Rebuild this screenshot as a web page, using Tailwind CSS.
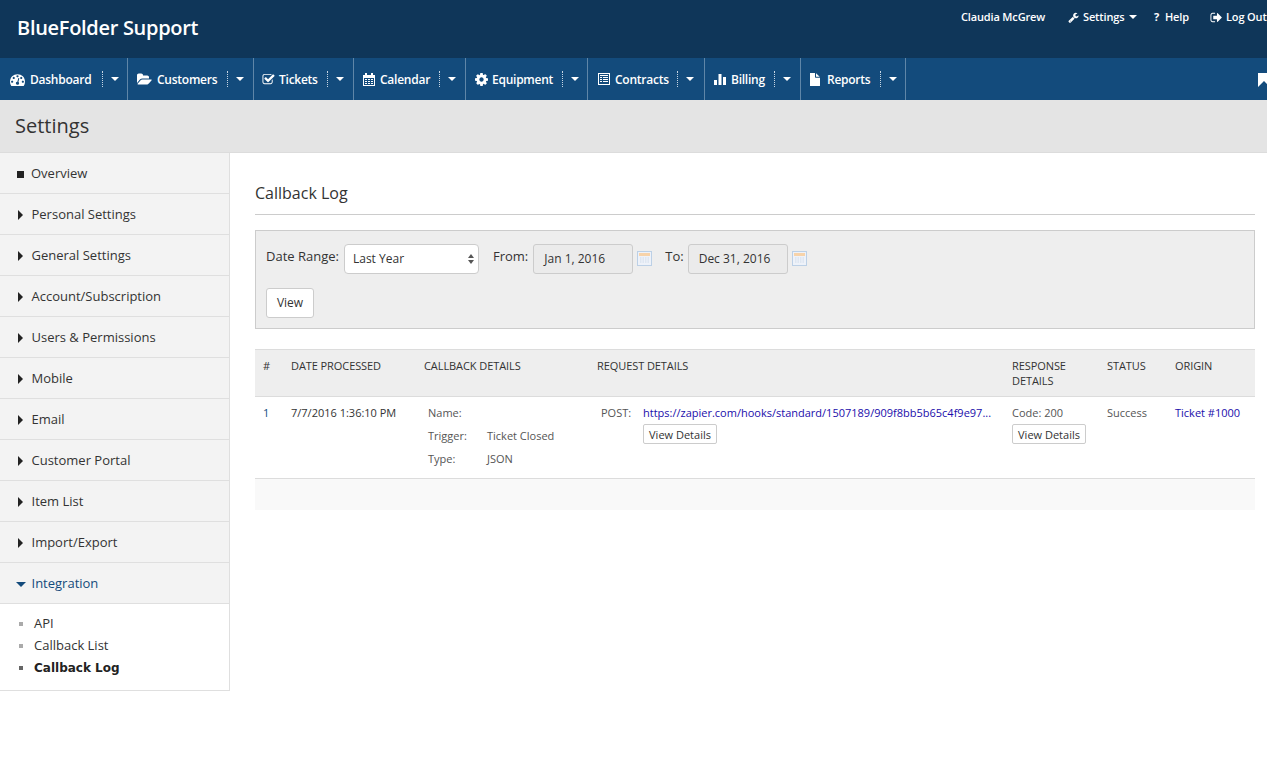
<!DOCTYPE html>
<html>
<head>
<meta charset="utf-8">
<script src="https://cdn.jsdelivr.net/npm/@tailwindcss/browser@4"></script>
</head>
<body class="h-[764px] overflow-hidden bg-white font-['Open_Sans',sans-serif] text-[13px] text-[#333]">
<header class="flex h-[58px] justify-between bg-[#0f3659] text-white">
  <div class="pl-[17px] pt-[14px] text-[20px] leading-[28px] font-semibold tracking-[-0.3px]">BlueFolder Support</div>
  <div class="flex h-[34px] items-center text-[11px] font-semibold tracking-[-0.15px]">
    <span class="mr-[24px] w-[83px] whitespace-nowrap">Claudia McGrew</span>
    <svg class="mr-[4px] h-[11px] w-[11px] fill-white" viewBox="0 0 1792 1792"><path d="M448 1472q0-26-19-45t-45-19-45 19-19 45 19 45 45 19 45-19 19-45zm644-420l-682 682q-37 37-90 37-52 0-91-37l-106-108q-38-36-38-90 0-53 38-91l681-681q39 98 114.5 173.5t173.5 114.5zm634-435q0 39-23 106-47 134-164.5 217.5t-258.5 83.5q-185 0-316.5-131.5t-131.5-316.5 131.5-316.5 316.5-131.5q58 0 121.5 16.5t107.5 46.5q16 11 16 28t-16 28l-293 169v224l193 107q5-3 79-48.5t135.5-81 70.5-35.5q15 0 23.5 10t8.5 25z"/></svg>
    <span class="mr-[4px] w-[42px]">Settings</span>
    <span class="mr-[17px] h-0 w-0 border-x-[4px] border-t-[4px] border-x-transparent border-t-white"></span>
    <span class="mr-[5px] w-[6px] font-bold">?</span><span class="mr-[21px] w-[24px]">Help</span>
    <svg class="mr-[3px] h-[13px] w-[13px] fill-white" viewBox="0 0 1792 1792"><path d="M704 1440q0 4 1 20t.5 26.5-3 23.5-10 19.5-20.5 6.5h-320q-119 0-203.5-84.5t-84.5-203.5v-704q0-119 84.5-203.5t203.5-84.5h320q13 0 22.5 9.5t9.5 22.5q0 4 1 20t.5 26.5-3 23.5-10 19.5-20.5 6.5h-320q-66 0-113 47t-47 113v704q0 66 47 113t113 47h312l11.5 1 11.5 3 8 5.5 7 9 2 13.5zm928-544q0 26-19 45l-544 544q-19 19-45 19t-45-19-19-45v-288h-448q-26 0-45-19t-19-45v-384q0-26 19-45t45-19h448v-288q0-26 19-45t45-19 45 19l544 544q19 19 19 45z"/></svg>
    <span class="w-[41px] whitespace-nowrap">Log Out</span>
  </div>
</header>
<nav class="flex h-[42px] overflow-hidden bg-[#134b7c] text-[12px] font-semibold tracking-[-0.25px] text-white">
  <div class="flex w-[128px] shrink-0 items-center border-r border-[#5f86a8] pl-[10px]">
    <svg class="mr-[5px] h-[15px] w-[15px] fill-white" viewBox="0 0 1792 1792"><path d="M384 1152q0-53-37.5-90.5t-90.5-37.5-90.5 37.5-37.5 90.5 37.5 90.5 90.5 37.5 90.5-37.5 37.5-90.5zm192-448q0-53-37.5-90.5t-90.5-37.5-90.5 37.5-37.5 90.5 37.5 90.5 90.5 37.5 90.5-37.5 37.5-90.5zm428 481l101-382q6-26-7.5-48.5t-38.5-29.5-48 6.5-30 39.5l-101 382q-60 5-107 43.5t-63 98.5q-20 77 20 146t117 89 146-20 89-117q16-60-6-117t-72-91zm660-33q0-53-37.5-90.5t-90.5-37.5-90.5 37.5-37.5 90.5 37.5 90.5 90.5 37.5 90.5-37.5 37.5-90.5zm-640-640q0-53-37.5-90.5t-90.5-37.5-90.5 37.5-37.5 90.5 37.5 90.5 90.5 37.5 90.5-37.5 37.5-90.5zm448 192q0-53-37.5-90.5t-90.5-37.5-90.5 37.5-37.5 90.5 37.5 90.5 90.5 37.5 90.5-37.5 37.5-90.5zm320 448q0 261-141 483-19 29-54 29h-1402q-35 0-54-29-141-221-141-483 0-182 71-348t191-286 286-191 348-71 348 71 286 191 191 286 71 348z"/></svg>
    <span class="mt-[1px] w-[72px]">Dashboard</span>
    <span class="h-[16px] w-0 border-l border-dotted border-[#c8d6e3]"></span>
    <span class="ml-[8px] h-0 w-0 border-x-[4px] border-t-[4px] border-x-transparent border-t-white"></span>
  </div>
  <div class="flex w-[126px] shrink-0 items-center border-r border-[#5f86a8] pl-[9px]">
    <svg class="mr-[5px] h-[15px] w-[15px] fill-white" viewBox="0 0 1920 1792"><path d="M1879 952q0 31-31 66l-336 396q-43 51-120.5 86.5t-143.5 35.5h-1088q-34 0-60.5-13t-26.5-43q0-31 31-66l336-396q43-51 120.5-86.5t143.5-35.5h1088q34 0 60.5 13t26.5 43zm-343-344v160h-832q-94 0-197 47.5t-164 119.5l-337 396-5 6q0-4-.5-12.5t-.5-12.5v-960q0-92 66-158t158-66h320q92 0 158 66t66 158v32h544q92 0 158 66t66 158z"/></svg>
    <span class="mt-[1px] w-[70px]">Customers</span>
    <span class="h-[16px] w-0 border-l border-dotted border-[#c8d6e3]"></span>
    <span class="ml-[8px] h-0 w-0 border-x-[4px] border-t-[4px] border-x-transparent border-t-white"></span>
  </div>
  <div class="flex w-[100px] shrink-0 items-center border-r border-[#5f86a8] pl-[8px]">
    <svg class="mr-[4px] h-[13px] w-[13px] fill-white" viewBox="0 0 1792 1792"><path d="M1472 930v318q0 119-84.5 203.5t-203.5 84.5h-832q-119 0-203.5-84.5t-84.5-203.5v-832q0-119 84.5-203.5t203.5-84.5h832q63 0 117 25 15 7 18 23 3 17-9 29l-49 49q-10 10-23 10-3 0-9-2-23-6-45-6h-832q-66 0-113 47t-47 113v832q0 66 47 113t113 47h832q66 0 113-47t47-113v-254q0-13 9-22l64-64q10-10 23-10 6 0 12 3 20 8 20 29zm231-489l-814 814q-24 24-57 24t-57-24l-430-430q-24-24-24-57t24-57l110-110q24-24 57-24t57 24l263 263 647-647q24-24 57-24t57 24l110 110q24 24 24 57t-24 57z"/></svg>
    <span class="mt-[1px] w-[48px]">Tickets</span>
    <span class="h-[16px] w-0 border-l border-dotted border-[#c8d6e3]"></span>
    <span class="ml-[8px] h-0 w-0 border-x-[4px] border-t-[4px] border-x-transparent border-t-white"></span>
  </div>
  <div class="flex w-[112px] shrink-0 items-center border-r border-[#5f86a8] pl-[9px]">
    <svg class="mr-[5px] h-[13px] w-[12px] fill-white" viewBox="0 0 12 13"><path fill-rule="evenodd" d="M2 0h2v2h4V0h2v2h2v11H0V2h2zM1 5v7h10V5zm1 1h2v1H2zm3 0h2v1H5zm3 0h2v1H8zM2 8h2v1H2zm3 0h2v1H5zm3 0h2v1H8zm-6 2h2v1H2zm3 0h2v1H5zm3 0h2v1H8z"/></svg>
    <span class="mt-[1px] w-[59px]">Calendar</span>
    <span class="h-[16px] w-0 border-l border-dotted border-[#c8d6e3]"></span>
    <span class="ml-[8px] h-0 w-0 border-x-[4px] border-t-[4px] border-x-transparent border-t-white"></span>
  </div>
  <div class="flex w-[122px] shrink-0 items-center border-r border-[#5f86a8] pl-[9px]">
    <svg class="mr-[4px] h-[13px] w-[13px] fill-white" viewBox="128 128 1536 1536"><path d="M1152 896q0-106-75-181t-181-75-181 75-75 181 75 181 181 75 181-75 75-181zm512-109v222q0 12-8 23t-20 13l-185 28q-19 54-39 91 35 50 107 138 10 12 10 25t-9 23q-27 37-99 108t-94 71q-12 0-26-9l-138-108q-44 23-91 38-16 136-29 186-7 28-36 28h-222q-14 0-24.5-8.5t-11.5-21.5l-28-184q-49-16-90-37l-141 107q-10 9-25 9-14 0-25-11-126-114-165-168-7-10-7-23 0-12 8-23 15-21 51-66.5t54-70.5q-27-50-41-99l-183-27q-13-2-21-12.5t-8-23.5v-222q0-12 8-23t19-13l186-28q14-46 39-92-40-57-107-138-10-12-10-24 0-10 9-23 26-36 98.5-107.5t94.5-71.5q13 0 26 10l138 107q44-23 91-38 16-136 29-186 7-28 36-28h222q14 0 24.5 8.5t11.5 21.5l28 184q49 16 90 37l142-107q9-9 24-9 13 0 25 10 129 119 165 170 7 8 7 22 0 12-8 23-15 21-51 66.5t-54 70.5q26 50 41 98l183 28q13 2 21 12.5t8 23.5z"/></svg>
    <span class="mt-[1px] w-[70px]">Equipment</span>
    <span class="h-[16px] w-0 border-l border-dotted border-[#c8d6e3]"></span>
    <span class="ml-[8px] h-0 w-0 border-x-[4px] border-t-[4px] border-x-transparent border-t-white"></span>
  </div>
  <div class="flex w-[117px] shrink-0 items-center border-r border-[#5f86a8] pl-[10px]">
    <svg class="mr-[5px] h-[12px] w-[12px] fill-white" viewBox="0 0 12 12"><path fill-rule="evenodd" d="M0 0h12v12H0zm1 1v10h10V1zm1 1h8v1H2zm0 2h2v1H2zm3 0h5v1H5zM2 6h2v1H2zm3 0h5v1H5zM2 8h2v1H2zm3 0h5v1H5z"/></svg>
    <span class="mt-[1px] w-[62px]">Contracts</span>
    <span class="h-[16px] w-0 border-l border-dotted border-[#c8d6e3]"></span>
    <span class="ml-[8px] h-0 w-0 border-x-[4px] border-t-[4px] border-x-transparent border-t-white"></span>
  </div>
  <div class="flex w-[96px] shrink-0 items-center border-r border-[#5f86a8] pl-[9px]">
    <svg class="mr-[5px] h-[12px] w-[12px] fill-white" viewBox="0 0 12 12"><path d="M0 7h3v5H0zM4.500 1h3v11h-3zM9 4h3v8H9z"/></svg>
    <span class="mt-[1px] w-[43px]">Billing</span>
    <span class="h-[16px] w-0 border-l border-dotted border-[#c8d6e3]"></span>
    <span class="ml-[8px] h-0 w-0 border-x-[4px] border-t-[4px] border-x-transparent border-t-white"></span>
  </div>
  <div class="flex w-[105px] shrink-0 items-center border-r border-[#5f86a8] pl-[9px]">
    <svg class="mr-[6px] h-[13px] w-[11px] fill-white" viewBox="256 128 1408 1664" preserveAspectRatio="none"><path d="M1152 512v-472q22 14 36 28l408 408q14 14 28 36h-472zm-128 32q0 40 28 68t68 28h544v1056q0 40-28 68t-68 28h-1344q-40 0-68-28t-28-68v-1600q0-40 28-68t68-28h800v544z" transform="translate(-128 128) scale(1 0.95)"/></svg>
    <span class="mt-[1px] w-[53px]">Reports</span>
    <span class="h-[16px] w-0 border-l border-dotted border-[#c8d6e3]"></span>
    <span class="ml-[8px] h-0 w-0 border-x-[4px] border-t-[4px] border-x-transparent border-t-white"></span>
  </div>
  <svg class="ml-[352px] mt-[15px] h-[14px] w-[12px] shrink-0 fill-white" viewBox="0 0 12 14"><path d="M0 0h12v14L6 8 0 14z"/></svg>
</nav>
<div class="flex h-[53px] items-center border-b border-[#dcdcdc] bg-[#e4e4e4] pl-[15px] text-[20px] text-[#333]">Settings</div>
<div class="flex">
  <aside class="w-[230px] shrink-0 self-start border-r border-b border-[#dfdfdf] bg-white pt-0 text-[13px]">
    <div class="flex h-[41px] items-center border-b border-[#dfdfdf] bg-[#f3f3f3] pt-[2px] pl-[17px]"><span class="mr-[7px] h-[7px] w-[7px] bg-[#222]"></span>Overview</div>
    <div class="flex h-[41px] items-center border-b border-[#dfdfdf] bg-[#f3f3f3] pt-[2px] pl-[18px]"><span class="mr-[8.500px] h-0 w-0 border-y-[5px] border-l-[5px] border-y-transparent border-l-[#222]"></span>Personal Settings</div>
    <div class="flex h-[41px] items-center border-b border-[#dfdfdf] bg-[#f3f3f3] pt-[2px] pl-[18px]"><span class="mr-[8.500px] h-0 w-0 border-y-[5px] border-l-[5px] border-y-transparent border-l-[#222]"></span>General Settings</div>
    <div class="flex h-[41px] items-center border-b border-[#dfdfdf] bg-[#f3f3f3] pt-[2px] pl-[18px]"><span class="mr-[8.500px] h-0 w-0 border-y-[5px] border-l-[5px] border-y-transparent border-l-[#222]"></span>Account/Subscription</div>
    <div class="flex h-[41px] items-center border-b border-[#dfdfdf] bg-[#f3f3f3] pt-[2px] pl-[18px]"><span class="mr-[8.500px] h-0 w-0 border-y-[5px] border-l-[5px] border-y-transparent border-l-[#222]"></span>Users &amp; Permissions</div>
    <div class="flex h-[41px] items-center border-b border-[#dfdfdf] bg-[#f3f3f3] pt-[2px] pl-[18px]"><span class="mr-[8.500px] h-0 w-0 border-y-[5px] border-l-[5px] border-y-transparent border-l-[#222]"></span>Mobile</div>
    <div class="flex h-[41px] items-center border-b border-[#dfdfdf] bg-[#f3f3f3] pt-[2px] pl-[18px]"><span class="mr-[8.500px] h-0 w-0 border-y-[5px] border-l-[5px] border-y-transparent border-l-[#222]"></span>Email</div>
    <div class="flex h-[41px] items-center border-b border-[#dfdfdf] bg-[#f3f3f3] pt-[2px] pl-[18px]"><span class="mr-[8.500px] h-0 w-0 border-y-[5px] border-l-[5px] border-y-transparent border-l-[#222]"></span>Customer Portal</div>
    <div class="flex h-[41px] items-center border-b border-[#dfdfdf] bg-[#f3f3f3] pt-[2px] pl-[18px]"><span class="mr-[8.500px] h-0 w-0 border-y-[5px] border-l-[5px] border-y-transparent border-l-[#222]"></span>Item List</div>
    <div class="flex h-[41px] items-center border-b border-[#dfdfdf] bg-[#f3f3f3] pt-[2px] pl-[18px]"><span class="mr-[8.500px] h-0 w-0 border-y-[5px] border-l-[5px] border-y-transparent border-l-[#222]"></span>Import/Export</div>
    <div class="flex h-[41px] items-center border-b border-[#dfdfdf] bg-[#f3f3f3] pt-[2px] pl-[16px] text-[#134b7c]"><span class="mr-[5.500px] h-0 w-0 border-x-[5px] border-t-[5px] border-x-transparent border-t-[#134b7c]"></span>Integration</div>
    <ul class="h-[86px] pt-[9px] pl-[19px] text-[#333]">
      <li class="flex h-[22px] items-center"><span class="mr-[11px] h-[4px] w-[4px] bg-[#aaa]"></span>API</li>
      <li class="flex h-[22px] items-center"><span class="mr-[11px] h-[4px] w-[4px] bg-[#aaa]"></span>Callback List</li>
      <li class="flex h-[22px] items-center font-['DejaVu_Sans',sans-serif] text-[12px] font-bold text-[#222]"><span class="mr-[11px] h-[4px] w-[4px] bg-[#666]"></span>Callback Log</li>
    </ul>
  </aside>
  <main class="w-[1025px] pl-[25px]">
    <h2 class="mt-[27px] h-[35px] border-b border-[#ccc] text-[16px] leading-[26px] text-[#333]">Callback Log</h2>
    <div class="mt-[15px] h-[99px] border border-[#ccc] bg-[#eee] pl-[10px]">
      <div class="flex h-[55px] items-center text-[13px]">
        <span class="mt-[-3px] mr-[5px]">Date Range:</span>
        <div class="flex h-[30px] w-[135px] items-center justify-between rounded-[4px] border border-[#ccc] bg-white pl-[8px] pr-[4px] text-[12px]">
          <span>Last Year</span>
          <svg class="h-[10px] w-[6px] fill-[#555]" viewBox="0 0 6 10"><path d="M3 0l3 4H0zM3 10L0 6h6z"/></svg>
        </div>
        <span class="mt-[-3px] ml-[14px] mr-[5px]">From:</span>
        <div class="flex h-[30px] w-[100px] items-center rounded-[3px] border border-[#ccc] bg-[#ebebeb] pl-[10px] text-[12px]">Jan 1, 2016</div>
        <svg class="ml-[4px] h-[15px] w-[15px]" viewBox="0 0 15 15"><rect x=".5" y=".5" width="14" height="14" fill="#eef2f9" stroke="#bcd0e6"/><rect x="2" y="2" width="11" height="3" fill="#f7d3aa"/><path d="M3 7h9M3 9h9M3 11h9" stroke="#cfdbea"/><path d="M5 6v7M7.500 6v7M10 6v7" stroke="#eef2f9"/></svg>
        <span class="mt-[-3px] ml-[13px] mr-[4px]">To:</span>
        <div class="flex h-[30px] w-[100px] items-center rounded-[3px] border border-[#ccc] bg-[#ebebeb] pl-[10px] text-[12px]">Dec 31, 2016</div>
        <svg class="ml-[4px] h-[15px] w-[15px]" viewBox="0 0 15 15"><rect x=".5" y=".5" width="14" height="14" fill="#eef2f9" stroke="#bcd0e6"/><rect x="2" y="2" width="11" height="3" fill="#f7d3aa"/><path d="M3 7h9M3 9h9M3 11h9" stroke="#cfdbea"/><path d="M5 6v7M7.500 6v7M10 6v7" stroke="#eef2f9"/></svg>
      </div>
      <button class="mt-[2px] h-[30px] w-[48px] rounded-[3px] border border-[#ccc] bg-white text-[12px]">View</button>
    </div>
    <table class="mt-[20px] w-[1000px] table-fixed border-collapse text-[11px]">
      <colgroup><col class="w-[28px]"><col class="w-[133px]"><col class="w-[173px]"><col class="w-[415px]"><col class="w-[95px]"><col class="w-[68px]"><col class="w-[88px]"></colgroup>
      <thead>
        <tr class="h-[47px] border-y border-[#dcdcdc] bg-[#eee] text-left align-top text-[11px] leading-[15px] tracking-[-0.08px] text-[#333]">
          <th class="px-[8px] pt-[8px] font-normal">#</th>
          <th class="px-[8px] pt-[8px] font-normal">DATE PROCESSED</th>
          <th class="px-[8px] pt-[8px] font-normal">CALLBACK DETAILS</th>
          <th class="px-[8px] pt-[8px] font-normal">REQUEST DETAILS</th>
          <th class="px-[8px] pt-[8px] font-normal">RESPONSE DETAILS</th>
          <th class="px-[8px] pt-[8px] font-normal">STATUS</th>
          <th class="px-[8px] pt-[8px] font-normal">ORIGIN</th>
        </tr>
      </thead>
      <tbody>
        <tr class="h-[82px] border-b border-[#dcdcdc] align-top leading-[15px] text-[#555]">
          <td class="px-[8px] pt-[8px] text-[#134b7c]">1</td>
          <td class="px-[8px] pt-[8px] text-[#333]">7/7/2016 1:36:10 PM</td>
          <td class="px-[8px] pt-[8px]">
            <div class="grid grid-cols-[59px_1fr] gap-y-[8px] pl-[4px]">
              <span>Name:</span><span></span>
              <span>Trigger:</span><span>Ticket Closed</span>
              <span>Type:</span><span>JSON</span>
            </div>
          </td>
          <td class="px-[8px] pt-[8px]">
            <div class="flex pl-[4px]">
              <span class="w-[42px] shrink-0">POST:</span>
              <div>
                <a class="block whitespace-nowrap text-[#1a0dab]">https://zapier.com/hooks/standard/1507189/909f8bb5b65c4f9e97...</a>
                <button class="mt-[4px] block h-[20px] w-[74px] rounded-[2px] border border-[#ccc] bg-white text-[11px] leading-[17px] text-[#333]">View Details</button>
              </div>
            </div>
          </td>
          <td class="px-[8px] pt-[8px]">
            <span class="block">Code: 200</span>
            <button class="mt-[4px] block h-[20px] w-[74px] rounded-[2px] border border-[#ccc] bg-white text-[11px] leading-[17px] text-[#333]">View Details</button>
          </td>
          <td class="px-[8px] pt-[8px]">Success</td>
          <td class="px-[8px] pt-[8px]"><a class="whitespace-nowrap text-[#1a0dab]">Ticket #1000</a></td>
        </tr>
        <tr class="h-[31px] bg-[#f9f9f9]"><td colspan="7"></td></tr>
      </tbody>
    </table>
  </main>
</div>
</body>
</html>
